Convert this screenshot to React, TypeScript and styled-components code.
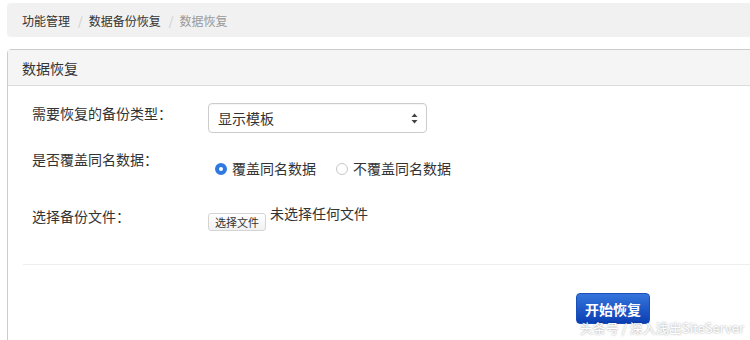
import styled, { createGlobalStyle } from 'styled-components';

const GlobalStyle = createGlobalStyle`
  html, body {
    margin: 0;
    padding: 0;
    background: #fff;
    overflow: hidden;
  }
  body {
    font-family: "Noto Sans CJK SC", "Noto Sans", "Liberation Sans", sans-serif;
    color: #333;
  }
`;

const S = {
  Page: styled.div`
    position: relative;
    width: 750px;
    height: 340px;
    padding: 3px 0 0 7px;
    box-sizing: border-box;
  `,
  Breadcrumb: styled.ol`
    display: flex;
    align-items: center;
    width: 800px;
    height: 34px;
    margin: 0;
    padding: 0 15px;
    list-style: none;
    background: #f1f1f1;
    border-radius: 4px;
    font-size: 12px;
    box-sizing: border-box;
  `,
  Crumb: styled.li<{ $active?: boolean }>`
    color: ${({ $active }) => ($active ? '#999' : '#333')};
    &:not(:first-child)::before {
      content: '/';
      color: #ccc;
      padding: 0 6px 0 8px;
    }
  `,
  Panel: styled.section`
    width: 800px;
    height: 300px;
    margin-top: 12px;
    border: 1px solid #ccc;
    border-radius: 4px 0 0 0;
    box-sizing: border-box;
  `,
  Heading: styled.h3`
    display: flex;
    align-items: center;
    height: 35px;
    margin: 0;
    padding: 0 14px;
    background: #f5f5f5;
    border-bottom: 1px solid #ddd;
    font-size: 14px;
    font-weight: normal;
    color: #333;
  `,
  Body: styled.div`
    padding: 17px 15px 0;
  `,
  Row: styled.div<{ $height: number }>`
    display: flex;
    align-items: flex-start;
    height: ${({ $height }) => $height}px;
    padding-left: 9px;
  `,
  Label: styled.label`
    width: 176px;
    flex: none;
    font-size: 14px;
    line-height: 20px;
  `,
  Select: styled.div`
    display: flex;
    align-items: center;
    justify-content: space-between;
    width: 219px;
    height: 30px;
    padding: 0 8px 0 9px;
    border: 1px solid #ccc;
    border-radius: 4px;
    box-sizing: border-box;
    font-size: 14px;
    color: #333;
    box-shadow: inset 0 1px 1px rgba(0, 0, 0, 0.04);
  `,
  Radios: styled.div`
    display: flex;
    align-items: center;
    padding-top: 9px;
    font-size: 14px;
    line-height: 20px;
  `,
  RadioItem: styled.span`
    display: inline-flex;
    align-items: center;
    margin-right: 13px;
  `,
  RadioDot: styled.span<{ $checked?: boolean }>`
    display: inline-block;
    width: 12px;
    height: 12px;
    margin: 2px 5px 0 7px;
    border-radius: 50%;
    box-sizing: border-box;
    border: ${({ $checked }) => ($checked ? '4px solid #2f79e0' : '1px solid #c8c8c8')};
    background: #fff;
  `,
  FileWrap: styled.div`
    display: flex;
    align-items: flex-start;
    font-size: 14px;
    line-height: 14px;
  `,
  FileButton: styled.button`
    margin: 7px 4px 0 0;
    height: 18px;
    padding: 0 6px;
    border: 1px solid #d4d4d4;
    border-radius: 3px;
    background: linear-gradient(#fff, #f1f1f1);
    font-family: inherit;
    font-size: 11px;
    line-height: 16px;
    color: #333;
  `,
  Divider: styled.hr`
    margin: 0;
    border: 0;
    border-top: 1px solid #eee;
  `,
  Footer: styled.div`
    padding: 28px 0 0 553px;
  `,
  Submit: styled.button`
    width: 74px;
    height: 31px;
    border: 1px solid #1a4fb8;
    border-radius: 4px;
    background: linear-gradient(#3575dc, #0b3eb2);
    color: #fff;
    font-family: inherit;
    font-size: 14px;
    font-weight: bold;
  `,
  Watermark: styled.div`
    position: absolute;
    right: 6px;
    bottom: 3px;
    font-size: 13px;
    color: #fff;
    text-shadow: 0 0 2px rgba(0, 0, 0, 0.45);
  `,
};

function UpDown() {
  return (
    <svg width="7" height="11" viewBox="0 0 7 11">
      <path d="M3.5 0.5 L6.5 4 H0.5 Z" fill="#444" />
      <path d="M3.5 10.5 L6.5 7 H0.5 Z" fill="#444" />
    </svg>
  );
}

export default function App() {
  return (
    <>
      <GlobalStyle />
      <S.Page>
        <S.Breadcrumb>
          <S.Crumb>功能管理</S.Crumb>
          <S.Crumb>数据备份恢复</S.Crumb>
          <S.Crumb $active>数据恢复</S.Crumb>
        </S.Breadcrumb>
        <S.Panel>
          <S.Heading>数据恢复</S.Heading>
          <S.Body>
            <S.Row $height={46}>
              <S.Label>需要恢复的备份类型：</S.Label>
              <S.Select>
                显示模板
                <UpDown />
              </S.Select>
            </S.Row>
            <S.Row $height={57}>
              <S.Label>是否覆盖同名数据：</S.Label>
              <S.Radios>
                <S.RadioItem>
                  <S.RadioDot $checked />
                  覆盖同名数据
                </S.RadioItem>
                <S.RadioItem>
                  <S.RadioDot />
                  不覆盖同名数据
                </S.RadioItem>
              </S.Radios>
            </S.Row>
            <S.Row $height={58}>
              <S.Label>选择备份文件：</S.Label>
              <S.FileWrap>
                <S.FileButton type="button">选择文件</S.FileButton>
                未选择任何文件
              </S.FileWrap>
            </S.Row>
            <S.Divider />
            <S.Footer>
              <S.Submit type="button">开始恢复</S.Submit>
            </S.Footer>
          </S.Body>
        </S.Panel>
        <S.Watermark>头条号 / 深入浅出SiteServer</S.Watermark>
      </S.Page>
    </>
  );
}
